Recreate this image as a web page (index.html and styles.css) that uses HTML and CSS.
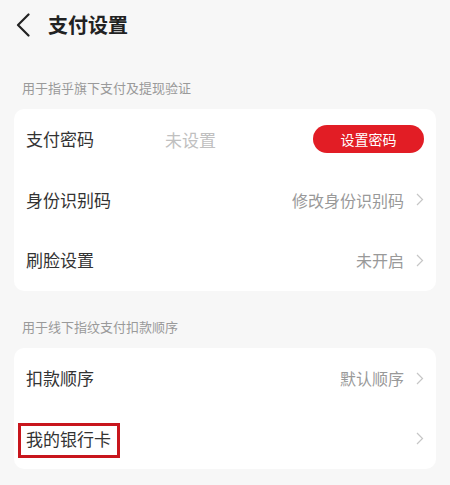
FILE: index.html
```html
<!DOCTYPE html>
<html lang="zh-CN">
<head>
  <meta charset="UTF-8">
  <meta name="viewport" content="width=device-width, initial-scale=1.0">
  <title>支付设置</title>
  <link rel="stylesheet" href="styles.css">
</head>
<body>
  <header class="topbar">
    <svg class="back" width="14" height="24" viewBox="0 0 14 24">
      <path d="M12.5 1.5 L2 12 L12.5 22.5" fill="none" stroke="#222" stroke-width="2.2" stroke-linecap="round" stroke-linejoin="round"/>
    </svg>
    <h1>支付设置</h1>
  </header>

  <p class="section-label">用于指乎旗下支付及提现验证</p>
  <div class="card">
    <div class="row">
      <span class="label fixed">支付密码</span>
      <span class="value muted">未设置</span>
      <span class="btn">设置密码</span>
    </div>
    <div class="row">
      <span class="label">身份识别码</span>
      <span class="value">修改身份识别码</span>
      <svg class="arrow" width="8" height="13" viewBox="0 0 8 13"><path d="M1 1 L6.5 6.5 L1 12" fill="none" stroke="#c6c6c6" stroke-width="1.2"/></svg>
    </div>
    <div class="row">
      <span class="label">刷脸设置</span>
      <span class="value">未开启</span>
      <svg class="arrow" width="8" height="13" viewBox="0 0 8 13"><path d="M1 1 L6.5 6.5 L1 12" fill="none" stroke="#c6c6c6" stroke-width="1.2"/></svg>
    </div>
  </div>

  <p class="section-label">用于线下指纹支付扣款顺序</p>
  <div class="card">
    <div class="row">
      <span class="label">扣款顺序</span>
      <span class="value">默认顺序</span>
      <svg class="arrow" width="8" height="13" viewBox="0 0 8 13"><path d="M1 1 L6.5 6.5 L1 12" fill="none" stroke="#c6c6c6" stroke-width="1.2"/></svg>
    </div>
    <div class="row">
      <span class="label marked">我的银行卡</span>
      <span class="value"></span>
      <svg class="arrow" width="8" height="13" viewBox="0 0 8 13"><path d="M1 1 L6.5 6.5 L1 12" fill="none" stroke="#c6c6c6" stroke-width="1.2"/></svg>
    </div>
  </div>
</body>
</html>
```

FILE: styles.css
```css
body {
  margin: 0;
  background: #f7f7f7;
  font-family: "Noto Sans CJK SC", "Noto Sans", sans-serif;
  color: #333;
}
.topbar {
  height: 50px;
  display: flex;
  align-items: center;
  padding-left: 16px;
}
.topbar h1 {
  margin: 0 0 0 18px;
  font-size: 20px;
  font-weight: 700;
  color: #222;
  line-height: 24px;
}
.section-label {
  margin: 29px 0 12px;
  padding: 0 22px;
  font-size: 13px;
  line-height: 18px;
  color: #9a9a9a;
}
.card + .section-label {
  margin-top: 27.5px;
}
.card {
  margin: 0 14px;
  background: #fff;
  border-radius: 10px;
}
.row {
  height: 60.5px;
  display: flex;
  align-items: center;
  padding: 0 12px;
}
.label {
  font-size: 17px;
  line-height: 24px;
  color: #333;
}
.label.fixed {
  width: 139px;
}
.value {
  flex: 1;
  text-align: right;
  font-size: 16px;
  color: #999;
}
.value.muted {
  text-align: left;
  font-size: 17px;
  color: #c0c0c0;
}
.arrow {
  margin-left: 12px;
}
.btn {
  width: 111px;
  height: 28px;
  border-radius: 14px;
  background: #e21d25;
  color: #fff;
  font-size: 14px;
  line-height: 28px;
  text-align: center;
}
.marked {
  position: relative;
}
.marked::after {
  content: "";
  position: absolute;
  top: -4px;
  bottom: -7px;
  left: -8px;
  right: -9px;
  border: 3px solid #c8161d;
}
```
